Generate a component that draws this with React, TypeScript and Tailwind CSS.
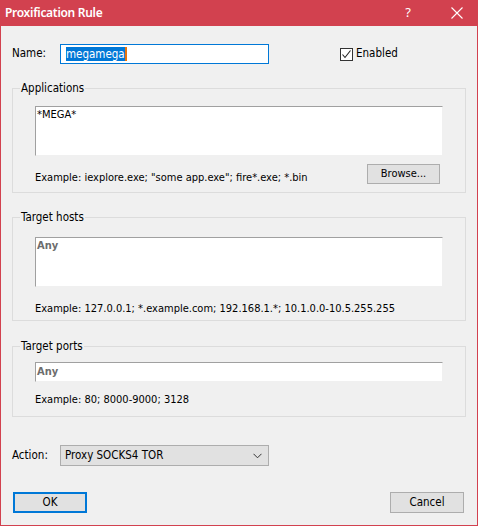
import React from "react";

const font = "font-['Tahoma','DejaVu_Sans_Condensed','Liberation_Sans',sans-serif]";

const Group = ({
  title,
  className,
  children,
}: {
  title: string;
  className?: string;
  children: React.ReactNode;
}) => (
  <fieldset className={`border border-[#dcdcdc] mx-[11px] px-[22px] ${className ?? ""}`}>
    <legend className="-ml-[15px] px-[1px] leading-[14px] text-[11.5px]">{title}</legend>
    {children}
  </fieldset>
);

const Sunken = ({ className, children }: { className?: string; children?: React.ReactNode }) => (
  <div
    className={`bg-white border border-t-[#a0a0a0] border-l-[#a0a0a0] border-r-[#f0f0f0] border-b-[#f0f0f0] px-[1px] ${className ?? ""}`}
  >
    {children}
  </div>
);

export default function App() {
  return (
    <div className={`w-[478px] h-[526px] bg-[#d2414f] flex flex-col text-[11px] text-black ${font}`}>
      {/* title bar */}
      <div className="h-[26px] flex items-center text-white shrink-0">
        <span className="ml-[5px] font-semibold text-[12px] tracking-[-0.3px] font-['Noto_Sans',sans-serif]">
          Proxification Rule
        </span>
        <span className="ml-auto mr-[40px] text-[13px] font-['Noto_Sans',sans-serif]">?</span>
        <svg width="12" height="12" viewBox="0 0 12 12" className="mr-[15px]">
          <path d="M0.5 0.5 L11.5 11.5 M11.5 0.5 L0.5 11.5" stroke="white" strokeWidth="1.1" />
        </svg>
      </div>

      <div className="flex-1 mx-[1px] mb-[1px] bg-[#f0f0f0] flex flex-col">
        {/* name row */}
        <div className="mt-[18px] flex items-center h-[20px]">
          <span className="ml-[11px] w-[48px] text-[11.5px]">Name:</span>
          <div className="w-[209px] h-[20px] border border-[#0078d7] bg-white flex items-center pl-[5px]">
            <span className="bg-[#0078d7] text-white leading-[14px] text-[11.5px]">megamega</span>
            <span className="w-[2px] h-[14px] bg-[#e8740c]" />
          </div>
          <div className="ml-[71px] flex items-center">
            <div className="w-[13px] h-[13px] border border-[#333] bg-white flex items-center justify-center">
              <svg width="11" height="11" viewBox="0 0 11 11">
                <path d="M1.5 5.5 L4 8.5 L9.5 1.5" stroke="#222" strokeWidth="1.1" fill="none" />
              </svg>
            </div>
            <span className="ml-[3px] text-[11.5px]">Enabled</span>
          </div>
        </div>

        {/* applications */}
        <Group title="Applications" className="mt-[17px] pb-[8px]">
          <Sunken className="mt-[11px] h-[50px]">
            <span className="leading-[14px]">*MEGA*</span>
          </Sunken>
          <div className="mt-[8px] flex items-start pr-[3px] h-[20px]">
            <span className="mt-[7px] leading-[13px]">Example: iexplore.exe; "some app.exe"; fire*.exe; *.bin</span>
            <button className="ml-auto w-[73px] h-[20px] bg-[#e1e1e1] border border-[#adadad] text-[11px]">
              Browse...
            </button>
          </div>
        </Group>

        {/* target hosts */}
        <Group title="Target hosts" className="mt-[17px] pb-[4px]">
          <Sunken className="mt-[13px] h-[50px]">
            <span className="font-bold text-[#6d6d6d] leading-[16px]">Any</span>
          </Sunken>
          <div className="mt-[15px] leading-[14px]">
            Example: 127.0.0.1; *.example.com; 192.168.1.*; 10.1.0.0-10.5.255.255
          </div>
        </Group>

        {/* target ports */}
        <Group title="Target ports" className="mt-[18px] pb-[9px]">
          <Sunken className="mt-[9px] h-[20px] flex items-center">
            <span className="font-bold text-[#6d6d6d]">Any</span>
          </Sunken>
          <div className="mt-[11px] leading-[14px]">Example: 80; 8000-9000; 3128</div>
        </Group>

        {/* action */}
        <div className="mt-[28px] flex items-center">
          <span className="ml-[11px] w-[48px] text-[11.5px]">Action:</span>
          <div className="w-[209px] h-[21px] bg-[#e1e1e1] border border-[#adadad] flex items-center pl-[4px] pr-[6px]">
            <span className="text-[11.5px]">Proxy SOCKS4 TOR</span>
            <svg width="9" height="6" viewBox="0 0 9 6" className="ml-auto">
              <path d="M0.5 0.8 L4.5 4.8 L8.5 0.8" stroke="#333" strokeWidth="1" fill="none" />
            </svg>
          </div>
        </div>

        {/* buttons */}
        <div className="mt-[26px] flex justify-between px-[12px] mr-[1px]">
          <button className="w-[74px] h-[21px] bg-[#e1e1e1] border-2 border-[#0078d7] text-[11.5px]">OK</button>
          <button className="w-[74px] h-[21px] bg-[#e1e1e1] border border-[#adadad] text-[11.5px]">Cancel</button>
        </div>
      </div>
    </div>
  );
}
